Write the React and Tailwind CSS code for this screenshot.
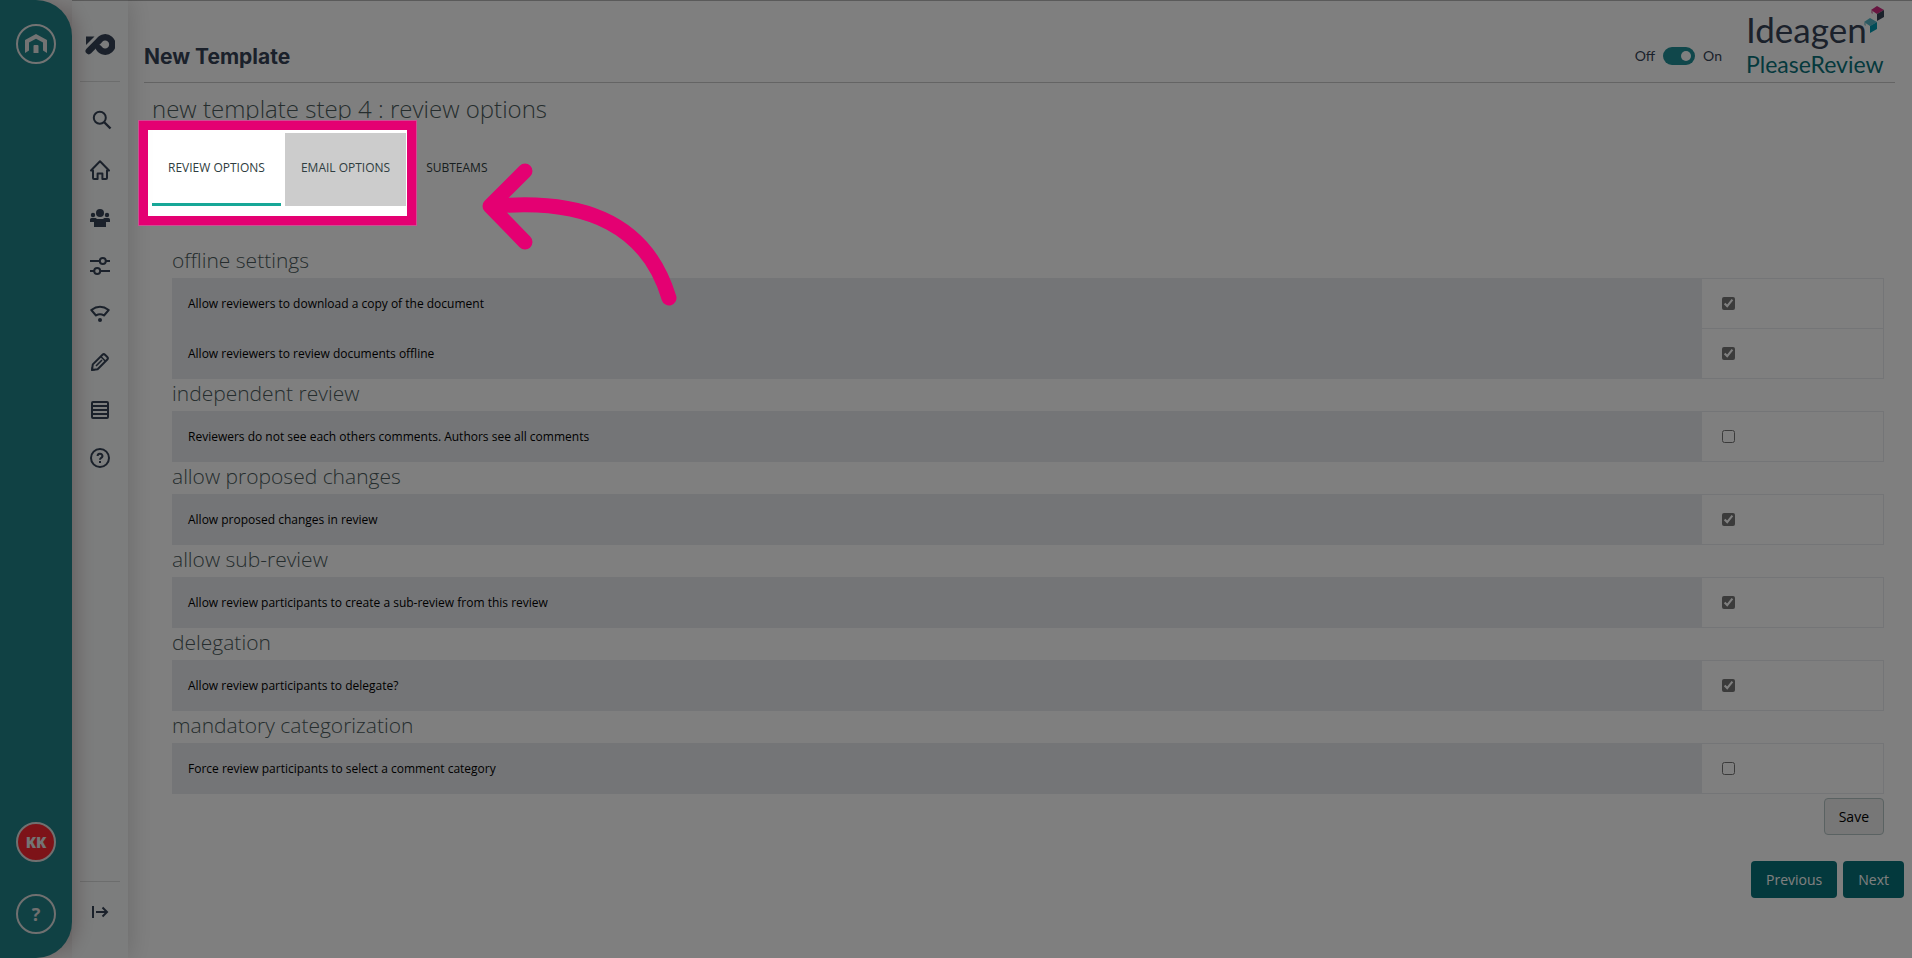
import React from 'react';

const sections = [
    {
        title: 'offline settings',
        options: [
            { id: 'download-copy', label: 'Allow reviewers to download a copy of the document', checked: true },
            { id: 'review-offline', label: 'Allow reviewers to review documents offline', checked: true }
        ]
    },
    {
        title: 'independent review',
        options: [
            { id: 'independent', label: 'Reviewers do not see each others comments. Authors see all comments', checked: false }
        ]
    },
    {
        title: 'allow proposed changes',
        options: [
            { id: 'proposed-changes', label: 'Allow proposed changes in review', checked: true }
        ]
    },
    {
        title: 'allow sub-review',
        options: [
            { id: 'sub-review', label: 'Allow review participants to create a sub-review from this review', checked: true }
        ]
    },
    {
        title: 'delegation',
        options: [
            { id: 'delegate', label: 'Allow review participants to delegate?', checked: true }
        ]
    },
    {
        title: 'mandatory categorization',
        options: [
            { id: 'force-category', label: 'Force review participants to select a comment category', checked: false }
        ]
    }
];

const railIcons = [
    {
        label: 'Search',
        icon: (
            <svg viewBox="0 0 20 20" className="h-5 w-5 overflow-visible" fill="none" stroke="currentColor" strokeWidth="2">
                <circle cx="9.8" cy="5.8" r="6" />
                <path d="M14 10l6.5 6.5" strokeWidth="2.4" />
            </svg>
        )
    },
    {
        label: 'Home',
        icon: (
            <svg viewBox="0 0 20 20" className="h-5 w-5" fill="none" stroke="currentColor" strokeWidth="2" strokeLinejoin="round" strokeLinecap="round">
                <path d="M1 10.5L10 1.3l9 9.2h-2V18a1 1 0 0 1-1 1h-3.6v-5.6H7.6V19H4a1 1 0 0 1-1-1v-7.5z" />
            </svg>
        )
    },
    {
        label: 'Teams',
        icon: (
            <svg viewBox="0 0 20 20" className="h-5 w-5" fill="currentColor">
                <circle cx="10" cy="5" r="4" />
                <circle cx="3" cy="7" r="2.2" />
                <circle cx="17" cy="7" r="2.2" />
                <path d="M0 14V11.6a1.6 1.6 0 0 1 1.6-1.6h4l1.5 1h5.8l1.5-1h4a1.6 1.6 0 0 1 1.6 1.6V14h-4v5H4v-5z" />
            </svg>
        )
    },
    {
        label: 'Settings',
        icon: (
            <svg viewBox="0 0 20 20" className="h-5 w-5" fill="none" stroke="currentColor" strokeWidth="2">
                <path d="M0 5h9.5M16 5h4M0 15h4M10.5 15H20" />
                <circle cx="12.8" cy="5" r="3" />
                <circle cx="7.2" cy="15" r="3" />
            </svg>
        )
    },
    {
        label: 'Connection',
        icon: (
            <svg viewBox="0 0 20 20" className="h-5 w-5" fill="none" stroke="currentColor" strokeWidth="2" strokeLinejoin="round">
                <path d="M1.3 6Q10-.3 18.7 6L14 11.5Q10 9 6 11.5z" />
                <circle cx="10" cy="16" r="2" fill="currentColor" stroke="none" />
            </svg>
        )
    },
    {
        label: 'Edit',
        icon: (
            <svg viewBox="0 0 20 20" className="h-5 w-5" fill="none" stroke="currentColor" strokeWidth="2" strokeLinejoin="round">
                <path d="M2 18l.8-5.6L12.5 2.7a1.8 1.8 0 0 1 2.5 0l2.3 2.3a1.8 1.8 0 0 1 0 2.5L7.6 17.2z" />
                <path d="M10.8 4.5l4.7 4.7M6 14l6-6" strokeWidth="1.6" />
                <path d="M1.5 18.5v-3.5l3.5 3.5z" fill="currentColor" stroke="none" />
            </svg>
        )
    },
    {
        label: 'Reports',
        icon: (
            <svg viewBox="0 0 20 20" className="h-5 w-5" fill="none" stroke="currentColor" strokeWidth="2">
                <rect x="2" y="2" width="16" height="16" rx="1" />
                <path d="M2 6h16M2 10h16M2 14h16" />
            </svg>
        )
    },
    {
        label: 'Help',
        icon: (
            <svg viewBox="0 0 20 20" className="h-5 w-5" fill="none" stroke="currentColor" strokeWidth="2">
                <circle cx="10" cy="10" r="9" />
                <path d="M7.6 8a2.4 2.2 0 1 1 3.6 1.9c-.8.5-1.2.9-1.2 1.8" />
                <path d="M10 13v2" />
            </svg>
        )
    }
];

function GlobalBar() {
    return (
        <aside className="relative z-20 flex w-18 shrink-0 flex-col items-center justify-between rounded-r-[36px] bg-[#208389] py-6 text-white shadow-[4px_0_20px_rgba(60,0,0,0.25)]">
            <button type="button" aria-label="Hub" className="flex h-10 w-10 items-center justify-center rounded-full border-2 border-[#e6e6e6]">
                <svg viewBox="0 0 24 20" className="h-5 w-6 text-[#e6e6e6]" fill="currentColor">
                    <path d="M1 19V6l11-6 11 6v13l-4-2.5V8.5l-7-3.8-7 3.8v8z" />
                    <path d="M9.5 19v-7a1 1 0 0 1 1-1h3a1 1 0 0 1 1 1v7z" />
                </svg>
            </button>
            <div className="flex flex-col gap-8">
                <button type="button" className="flex h-10 w-10 items-center justify-center rounded-full border-2 border-[#e0e0e0] bg-[#fb2731] font-['Open_Sans'] text-[15px] font-extrabold text-[#e8e8e8]">
                    KK
                </button>
                <button type="button" className="flex h-10 w-10 items-center justify-center rounded-full border-2 border-[#e0e0e0] font-['Open_Sans'] text-lg font-bold text-[#e0e0e0]">
                    ?
                </button>
            </div>
        </aside>
    );
}

function IconRail() {
    return (
        <nav className="relative z-10 flex w-14 shrink-0 flex-col items-center border-t border-[#b4b4b4] bg-[#f9fbfb] px-2 pt-6 pb-9 text-[#364356] shadow-[2px_0_24px_rgba(0,0,0,0.16)]">
            <svg viewBox="0 0 30 22" className="mt-2 h-[22px] w-[30px]" fill="none">
                <path d="M1 3.5h8.5L1 12z" fill="#364356" />
                <path d="M3.8 18L14.2 7.5A7.2 7.2 0 1 1 14.2 15.5" stroke="#364356" strokeWidth="6.5" strokeLinecap="round" strokeLinejoin="round" />
            </svg>
            <div className="mt-[26px] w-10 border-t border-[#d8dada]" />
            <ul className="mt-[30px] flex flex-col gap-7">
                {railIcons.map((item) => (
                    <li key={item.label}>
                        <a href="#" aria-label={item.label} className="block">
                            {item.icon}
                        </a>
                    </li>
                ))}
            </ul>
            <div className="mt-auto w-10 border-t border-[#d8dada]" />
            <button type="button" aria-label="Expand menu" className="mt-5">
                <svg viewBox="0 0 20 20" className="h-5 w-5" fill="none" stroke="currentColor" strokeWidth="2">
                    <path d="M3 4v12M6 10h11M12.5 5.5L17 10l-4.5 4.5" />
                </svg>
            </button>
        </nav>
    );
}

function BrandLogo() {
    return (
        <div className="relative flex w-[138px] flex-col font-['Lato']">
            <span className="text-[35px] leading-[42px] text-[#364356]">Ideagen</span>
            <span className="text-[23px] leading-7 text-[#0a737a]">PleaseReview</span>
            <svg viewBox="0 0 20 28" className="absolute -top-0.5 right-0 h-7 w-5">
                <path d="M7 4l6-4 7 4-7 4z" fill="#d02a80" />
                <path d="M7 4l2 1.2V8L7 7z" fill="#e0a0c0" />
                <path d="M13 8l7-4v7l-7 4z" fill="#364356" />
                <path d="M0 16l6-4 7 4-7 4z" fill="#56b4c4" />
                <path d="M0 16l2 1.2V20l-2-1z" fill="#a8d4dc" />
                <path d="M6 20l7-4v7l-7 4z" fill="#0099b0" />
            </svg>
        </div>
    );
}

function OptionSection({ title, options }) {
    return (
        <section>
            <h3 className="h-8 text-[21px] leading-7 font-light text-[#4c5b5c]">{title}</h3>
            <table className="w-full border-collapse text-xs">
                <tbody>
                    {options.map((option) => (
                        <tr key={option.id} className="h-[50px]">
                            <td className="border-y border-[#e9ebef] bg-[#e9ebef] px-4">
                                <label htmlFor={option.id}>{option.label}</label>
                            </td>
                            <td className="w-[182px] border border-[#e9ebef] px-5">
                                <input
                                    id={option.id}
                                    type="checkbox"
                                    defaultChecked={option.checked}
                                    className="block h-[13px] w-[13px] accent-[#767676]"
                                />
                            </td>
                        </tr>
                    ))}
                </tbody>
            </table>
        </section>
    );
}

// Dims the page around the highlighted tabs and points at them
function Spotlight() {
    return (
        <div className="pointer-events-none fixed inset-0 z-50 overflow-hidden">
            <div className="absolute top-[121px] left-[139px] h-[104px] w-[277px] border-9 border-[#e40072] shadow-[0_0_0_1px_#cc4f92,0_0_0_9999px_rgba(0,0,0,0.5)]" />
            <svg viewBox="0 0 200 160" className="absolute top-[155px] left-[480px] h-[160px] w-[200px]" fill="none" stroke="#e40072" strokeWidth="15" strokeLinecap="round" strokeLinejoin="round">
                <path d="M45 16L10 51l35 36" />
                <path d="M16 51C110 43 168 73 189 143" />
            </svg>
        </div>
    );
}

export default function App() {
    return (
        <div className="flex min-h-screen bg-white font-['Open_Sans',sans-serif] text-black">
            <GlobalBar />
            <IconRail />
            <main className="flex-1 border-t border-[#b4b4b4]">
                <header className="mr-[17px] ml-4 flex h-[82px] items-end justify-between border-b border-[#c8c8c8]">
                    <h1 className="pb-[11px] font-['Inter'] text-[21px] leading-7 font-bold text-[#364356]">New Template</h1>
                    <div className="flex items-center gap-6 pr-[11px] pb-1">
                        <div className="flex items-center gap-2 pt-[26px] font-['Lato'] text-sm text-[#364356]">
                            <span>Off</span>
                            <button type="button" role="switch" aria-checked="true" aria-label="New interface" className="flex h-[18px] w-8 items-center justify-end rounded-full bg-[#208f97] pr-1">
                                <span className="h-[10px] w-[10px] rounded-full bg-white" />
                            </button>
                            <span>On</span>
                        </div>
                        <BrandLogo />
                    </div>
                </header>

                <h2 className="mt-2 ml-6 h-[42px] text-2xl leading-9 font-light text-[#4c5b5c]">new template step 4 : review options</h2>
                <div role="tablist" className="ml-6 flex gap-1 text-xs text-[#2f3d40]">
                    <button type="button" role="tab" aria-selected="true" className="h-[73px] border-b-3 border-[#17a797] px-4">REVIEW OPTIONS</button>
                    <button type="button" role="tab" className="h-[73px] border-b-3 border-[#cccccc] bg-[#cccccc] px-4">EMAIL OPTIONS</button>
                    <button type="button" role="tab" className="h-[73px] border-b-3 border-transparent px-4">SUBTEAMS</button>
                </div>

                <div className="mt-10 mr-7 ml-11">
                    {sections.map((section) => (
                        <OptionSection key={section.title} {...section} />
                    ))}
                </div>
                <div className="mt-1 mr-7 flex justify-end">
                    <button type="button" className="h-[37px] rounded border border-[#b5c4c5] bg-[#eeeeee] px-[14px] text-sm">Save</button>
                </div>
                <div className="mt-[26px] mr-2 flex justify-end gap-[6px] text-sm text-white">
                    <button type="button" className="h-[37px] rounded bg-[#07737a] px-[15px]">Previous</button>
                    <button type="button" className="h-[37px] rounded bg-[#07737a] px-[15px]">Next</button>
                </div>
            </main>
            <Spotlight />
        </div>
    );
}
